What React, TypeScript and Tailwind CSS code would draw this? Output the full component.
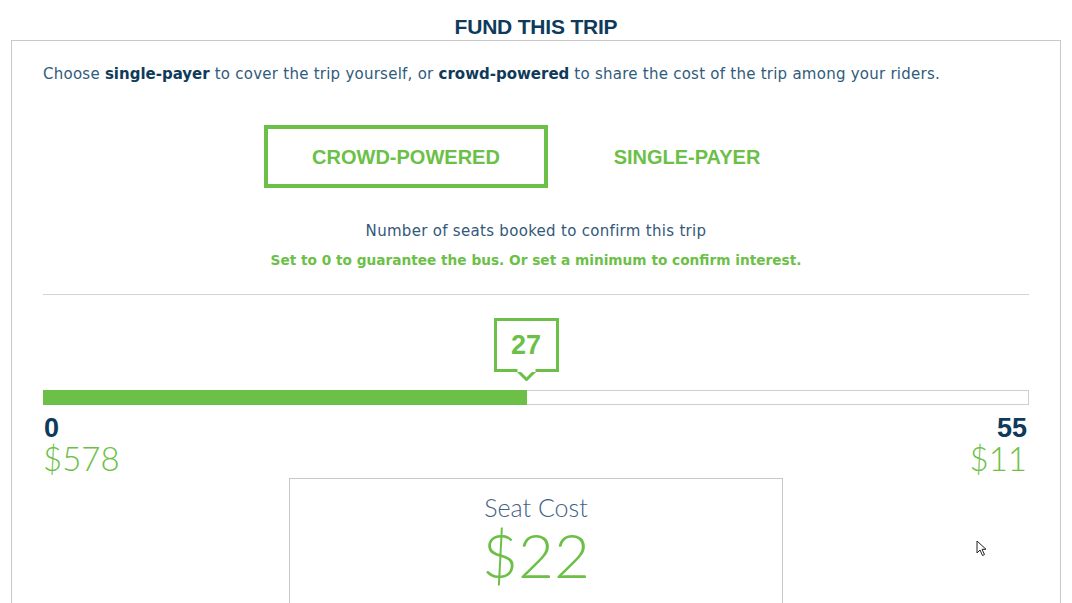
import React from "react";

const GREEN = "#6cbf47";

export default function App() {
  const value = 27;
  const max = 55;
  const trackW = 985;
  const fillW = (value / max) * trackW;
  const body = { fontFamily: "'DejaVu Sans', 'Liberation Sans', sans-serif" };
  return (
    <div className="w-[1072px] h-[603px] overflow-hidden bg-white relative" style={{ fontFamily: "'Liberation Sans', Arial, sans-serif" }}>
      <div className="h-[40px] pt-[14px] text-center text-[21px] leading-[26px] font-bold text-[#0e3a5c] tracking-[-0.2px]">
        FUND THIS TRIP
      </div>
      <div className="ml-[11px] w-[1050px] h-[700px] border border-[#c9c9c9] px-[31px]">
        <p className="pt-[23px] text-[15px] leading-[20px] tracking-[0.25px] text-[#2f5b7c]" style={body}>
          Choose <span className="font-bold text-[#0f3a5a] tracking-[0px]">single-payer</span> to cover the trip yourself, or{" "}
          <span className="font-bold text-[#0f3a5a] tracking-[0px]">crowd-powered</span> to share the cost of the trip among your riders.
        </p>
        <div className="mt-[41px] flex items-center">
          <div className="ml-[221px] w-[284px] h-[63px] border-4 border-[#6cbf47] flex items-center justify-center text-[20px] font-bold text-[#6cbf47]">
            CROWD-POWERED
          </div>
          <div className="w-[278px] text-center text-[20px] font-bold text-[#6cbf47]">SINGLE-PAYER</div>
        </div>
        <p className="mt-[33px] text-center text-[15px] leading-[20px] tracking-[0.3px] text-[#34587a]" style={body}>
          Number of seats booked to confirm this trip
        </p>
        <p className="mt-[9px] text-center text-[13.7px] leading-[20px] font-bold text-[#6cbf47]" style={body}>
          Set to 0 to guarantee the bus. Or set a minimum to confirm interest.
        </p>
        <div className="mt-[24px] border-t border-[#d4d4d4]" />
        <div className="relative h-[95px]">
          <div className="absolute top-[23px] w-[65px]" style={{ left: fillW - 33 }}>
            <div className="h-[54px] border-[3px] border-[#6cbf47] bg-white flex items-center justify-center text-[27px] font-bold text-[#6cbf47]">
              27
            </div>
            <svg width="65" height="12" viewBox="0 0 65 12" className="absolute left-0 top-[51px]">
              <polygon points="22,0 32.5,10.5 43,0" fill="white" stroke={GREEN} strokeWidth="3" />
              <rect x="23.5" y="0" width="18" height="3" fill="white" />
            </svg>
          </div>
        </div>
        <div className="h-[15px] border border-[#cfcfcf] bg-white relative">
          <div className="absolute left-[-1px] top-[-1px] h-[15px] bg-[#6cbf47]" style={{ width: fillW }} />
        </div>
        <div className="mt-[10px] flex justify-between">
          <div>
            <div className="pl-[1px] text-[27px] leading-[27px] font-bold text-[#0e3a5c]">0</div>
            <div className="text-[33px] leading-[33px] text-[#6cbf47]" style={{ fontFamily: "Lato, 'Liberation Sans', sans-serif", fontWeight: 300 }}>
              $578
            </div>
          </div>
          <div className="text-right pr-[2px]">
            <div className="text-[27px] leading-[27px] font-bold text-[#0e3a5c]">55</div>
            <div className="text-[33px] leading-[33px] text-[#6cbf47]" style={{ fontFamily: "Lato, 'Liberation Sans', sans-serif", fontWeight: 300 }}>
              $11
            </div>
          </div>
        </div>
        <div className="mx-auto mt-[3px] w-[494px] h-[200px] border border-[#c9c9c9] text-center" style={{ fontFamily: "Lato, 'Liberation Sans', sans-serif" }}>
          <div className="pt-[13px] text-[25px] leading-[30px] text-[#3f6282]" style={{ fontWeight: 300 }}>Seat Cost</div>
          <div className="text-[62px] leading-[64px] text-[#6cbf47]" style={{ fontWeight: 300 }}>$22</div>
        </div>
      </div>
      <svg width="12" height="18" viewBox="0 0 12 18" className="absolute left-[976px] top-[540px]">
        <path d="M1 1 L1 13 L4 10 L6.5 15.5 L8.5 14.5 L6 9.3 L10 9.3 Z" fill="white" stroke="#222" strokeWidth="1" strokeLinejoin="round" />
      </svg>
    </div>
  );
}
